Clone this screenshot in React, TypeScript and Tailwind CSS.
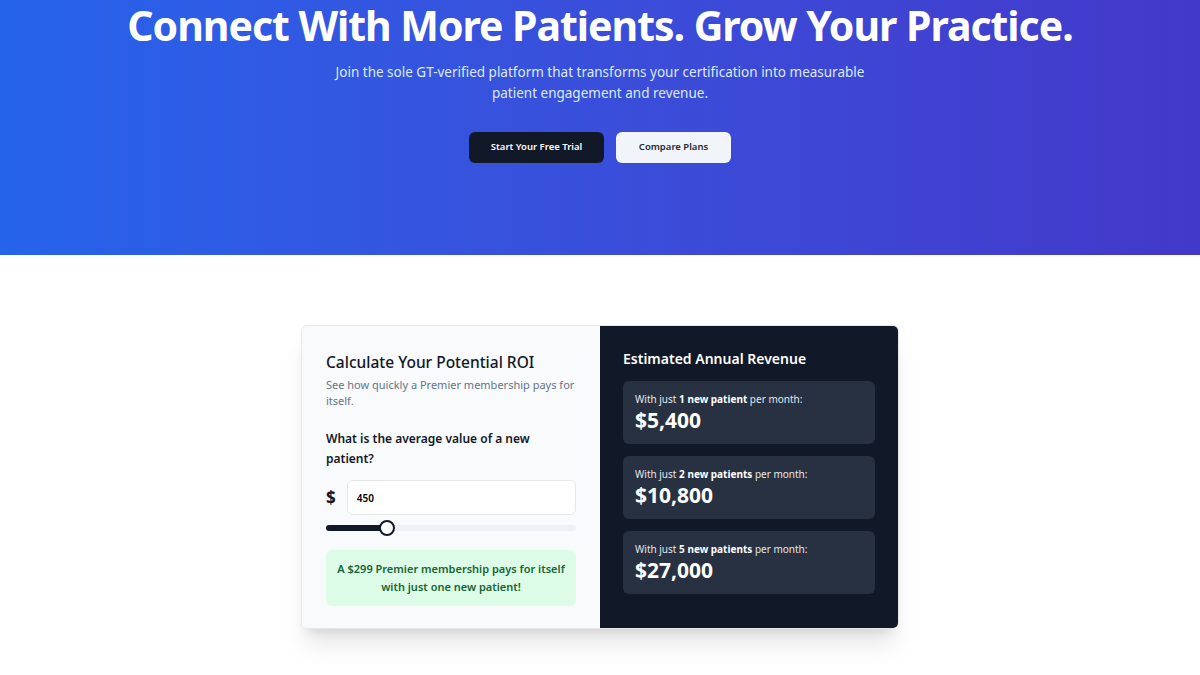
import { useState } from 'react';

const font = { fontFamily: '"Noto Sans", "Open Sans", sans-serif' };

function RevenueRow({ count, label, value }: { count: number; label: string; value: string }) {
  return (
    <div className="rounded-md bg-[#283141] px-3 pt-[11px] pb-[10px]">
      <p className="text-[10px] leading-[14px] text-gray-200">
        With just <span className="font-bold text-white">{count} {label}</span> per month:
      </p>
      <p className="text-[21px] leading-[28px] font-bold text-white">{value}</p>
    </div>
  );
}

export default function App() {
  const [value, setValue] = useState(450);
  const pct = Math.min(1, Math.max(0, value / 2000));

  return (
    <div className="min-h-[675px] bg-white overflow-hidden" style={font}>
      <section className="h-[255px] bg-gradient-to-r from-[#2563eb] to-[#4338ca] text-center">
        <h1 className="text-[41px] leading-[50px] font-bold tracking-tight text-white">
          Connect With More Patients. Grow Your Practice.
        </h1>
        <p className="mx-auto mt-[12px] max-w-[560px] text-[13.5px] leading-[21px] text-[#dbeafe]">
          Join the sole GT-verified platform that transforms your certification into measurable patient engagement and revenue.
        </p>
        <div className="mt-[28px] flex justify-center gap-3">
          <button className="h-[31px] w-[135px] rounded-md bg-[#111827] text-[9.5px] font-semibold text-white">
            Start Your Free Trial
          </button>
          <button className="h-[31px] w-[115px] rounded-md bg-[#f1f5f9] text-[9.5px] font-semibold text-[#1f2937]">
            Compare Plans
          </button>
        </div>
      </section>

      <section className="flex justify-center pt-[70px]">
        <div className="grid h-[304px] w-[598px] grid-cols-2 overflow-hidden rounded-md border border-gray-200 shadow-xl">
          <div className="bg-[#f8fafc] px-6 pt-[24px]">
            <h2 className="text-[15.5px] leading-[24px] font-medium text-[#111827]">Calculate Your Potential ROI</h2>
            <p className="mt-[3px] text-[11px] leading-[16px] text-[#64748b]">
              See how quickly a Premier membership pays for itself.
            </p>
            <p className="mt-[20px] text-[12px] leading-[20px] font-semibold text-[#111827]">
              What is the average value of a new patient?
            </p>
            <div className="mt-[11px] flex items-center gap-[11px]">
              <span className="text-[17px] font-bold text-[#111827]">$</span>
              <input
                type="text"
                value={value}
                onChange={(e) => setValue(Number(e.target.value) || 0)}
                className="h-[35px] flex-1 rounded-md border border-gray-200 bg-white px-[9px] text-[10px] font-semibold text-black outline-none"
              />
            </div>
            <div className="relative mt-[5px] h-[16px]">
              <div className="absolute top-[5px] left-0 right-0 h-[6px] rounded-full bg-[#eef0f5]" />
              <div
                className="absolute top-[5px] left-0 h-[6px] rounded-full bg-[#111827]"
                style={{ width: `calc(8px + ${pct} * (100% - 16px))` }}
              />
              <div
                className="absolute top-0 h-[16px] w-[16px] rounded-full border-2 border-[#111827] bg-white"
                style={{ left: `calc(${pct} * (100% - 16px))` }}
              />
            </div>
            <div className="mt-[14px] rounded-md bg-[#dcfce7] px-1 py-[10px] text-center text-[11px] leading-[18px] font-semibold text-[#166534]">
              A $299 Premier membership pays for itself with just one new patient!
            </div>
          </div>
          <div className="bg-[#111827] px-[23px] pt-[23px]">
            <h3 className="text-[14px] leading-[20px] font-semibold text-white">Estimated Annual Revenue</h3>
            <div className="mt-[12px] flex flex-col gap-3">
              <RevenueRow count={1} label="new patient" value="$5,400" />
              <RevenueRow count={2} label="new patients" value="$10,800" />
              <RevenueRow count={5} label="new patients" value="$27,000" />
            </div>
          </div>
        </div>
      </section>
    </div>
  );
}
